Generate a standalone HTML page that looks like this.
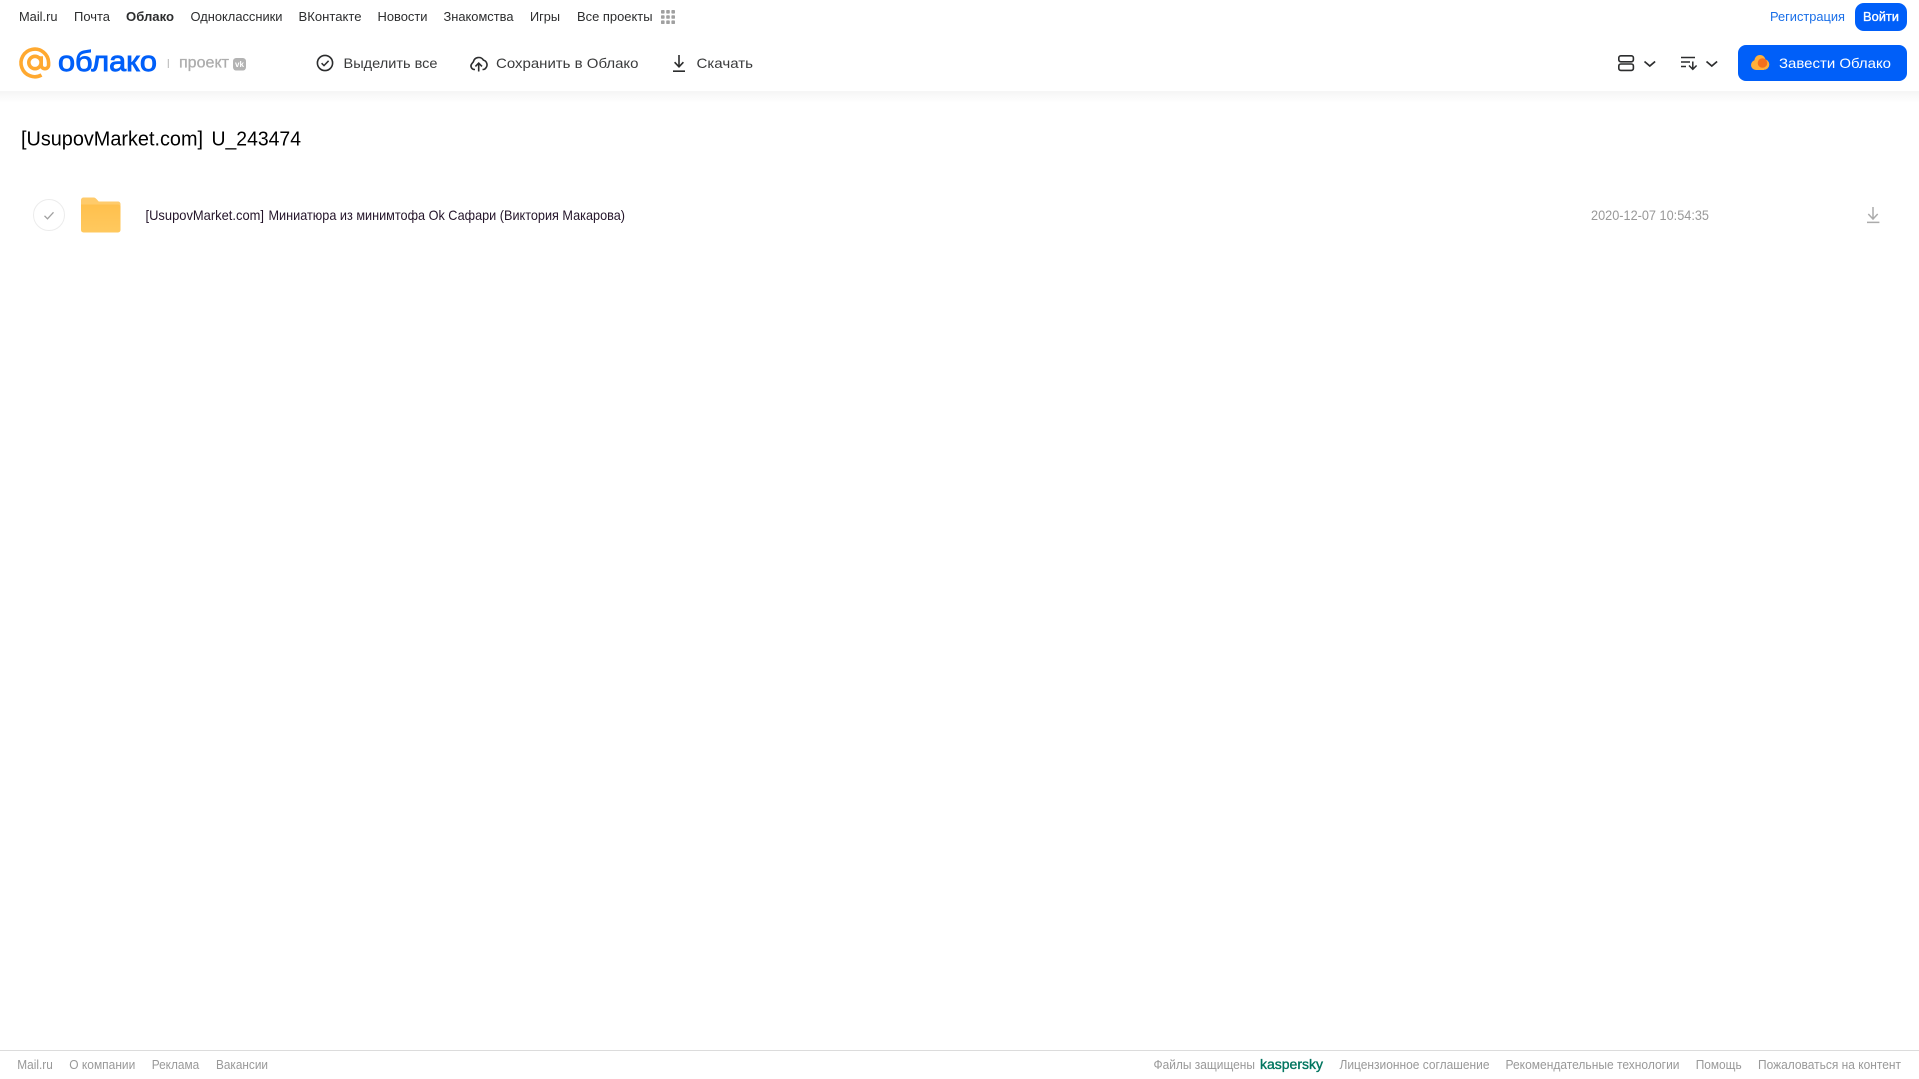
<!DOCTYPE html>
<html lang="ru"><head><meta charset="utf-8"><title>[UsupovMarket.com] U_243474</title>
<style>
html,body{margin:0;padding:0;background:#fff;width:1919px;height:1079px;overflow:hidden}
svg{display:block;position:absolute;left:0;top:0}
text{font-family:"Liberation Sans",sans-serif;white-space:pre}
.n{font-size:13px;fill:#2c2d2e}
.t{font-size:14px;fill:#3a3b3c}
.f{font-size:13px;fill:#999}
</style></head><body>
<svg width="1919" height="1079" viewBox="0 0 1919 1079" xmlns="http://www.w3.org/2000/svg">
<defs>
<linearGradient id="sh" x1="0" y1="0" x2="0" y2="1"><stop offset="0" stop-color="#f5f5f5"/><stop offset="1" stop-color="#fff"/></linearGradient>
<linearGradient id="fo" x1="0" y1="0" x2="0" y2="1"><stop offset="0" stop-color="#ffc04d"/><stop offset="1" stop-color="#ffc95f"/></linearGradient>
</defs>
<rect x="0" y="91" width="1919" height="12" fill="url(#sh)"/>

<!-- top nav -->
<g class="nav">
<text class="n" x="19" y="21" textLength="38.5" lengthAdjust="spacingAndGlyphs">Mail.ru</text>
<text class="n" x="74" y="21" textLength="36" lengthAdjust="spacingAndGlyphs">Почта</text>
<text class="n" x="126" y="21" textLength="48" lengthAdjust="spacingAndGlyphs" font-weight="700">Облако</text>
<text class="n" x="190.5" y="21" textLength="92" lengthAdjust="spacingAndGlyphs">Одноклассники</text>
<text class="n" x="298.5" y="21" textLength="63" lengthAdjust="spacingAndGlyphs">ВКонтакте</text>
<text class="n" x="377.5" y="21" textLength="50" lengthAdjust="spacingAndGlyphs">Новости</text>
<text class="n" x="443.5" y="21" textLength="70" lengthAdjust="spacingAndGlyphs">Знакомства</text>
<text class="n" x="530" y="21" textLength="30" lengthAdjust="spacingAndGlyphs">Игры</text>
<text class="n" x="577" y="21" textLength="75.5" lengthAdjust="spacingAndGlyphs">Все проекты</text>
</g>
<g fill="#a0a0a0">
<rect x="661" y="10" width="3.6" height="3.6" rx=".8"/><rect x="666.2" y="10" width="3.6" height="3.6" rx=".8"/><rect x="671.4" y="10" width="3.6" height="3.6" rx=".8"/>
<rect x="661" y="15.2" width="3.6" height="3.6" rx=".8"/><rect x="666.2" y="15.2" width="3.6" height="3.6" rx=".8"/><rect x="671.4" y="15.2" width="3.6" height="3.6" rx=".8"/>
<rect x="661" y="20.4" width="3.6" height="3.6" rx=".8"/><rect x="666.2" y="20.4" width="3.6" height="3.6" rx=".8"/><rect x="671.4" y="20.4" width="3.6" height="3.6" rx=".8"/>
</g>
<text x="1770" y="21" font-size="13" fill="#1a6fe8" textLength="75" lengthAdjust="spacingAndGlyphs">Регистрация</text>
<rect x="1855" y="3" width="52" height="28" rx="9" fill="#005ff9"/>
<text x="1863" y="21" font-size="13" fill="#fff" stroke="#fff" stroke-width=".35" textLength="36" lengthAdjust="spacingAndGlyphs">Войти</text>

<!-- logo -->
<g transform="translate(19,47)" fill="none" stroke="#ffa930" stroke-width="3.6">
<circle cx="16" cy="15.5" r="6.2"/>
<path d="M22.2 9.2V18a3.7 3.7 0 0 0 7.4 0V15.5A13.8 13.8 0 1 0 22.5 28"/>
</g>
<text x="58" y="71" font-size="29" fill="#005ff9" stroke="#005ff9" stroke-width=".9" textLength="99" lengthAdjust="spacingAndGlyphs">облако</text>
<rect x="167.8" y="59" width="1" height="9" fill="#b5b5b5"/>
<text x="179" y="67.5" font-size="16" fill="#adadad" stroke="#adadad" stroke-width=".3" textLength="50" lengthAdjust="spacingAndGlyphs">проект</text>
<rect x="233" y="58" width="13" height="12.5" rx="3.2" fill="#b3b3b3"/>
<text x="235" y="67" font-size="8" font-weight="700" fill="#fff" textLength="9" lengthAdjust="spacingAndGlyphs">vk</text>

<!-- toolbar -->
<circle cx="325" cy="63" r="7.6" fill="none" stroke="#2c2d2e" stroke-width="1.6"/>
<path d="M321.6 63.2l2.4 2.4 4.6-4.8" fill="none" stroke="#2c2d2e" stroke-width="1.5"/>
<text class="t" x="343.5" y="68" textLength="94" lengthAdjust="spacingAndGlyphs">Выделить все</text>

<path d="M475 69.5h-1.2a3.6 3.6 0 0 1-2-5.8l1.6-2a5.5 5.5 0 0 1 10-1.6 4.8 4.8 0 0 1 2.6 7.6c-.7 1.2-1.6 1.8-2.8 1.8h-.7" fill="none" stroke="#2c2d2e" stroke-width="1.6"/>
<path d="M478.7 71.5V63.5M475.4 66.4l3.3-3.3 3.3 3.3" fill="none" stroke="#2c2d2e" stroke-width="1.6"/>
<text class="t" x="496" y="68" textLength="142.5" lengthAdjust="spacingAndGlyphs">Сохранить в Облако</text>

<path d="M679 55v11.5M674.6 62.2l4.4 4.6 4.4-4.6M673 71.2h12" fill="none" stroke="#2c2d2e" stroke-width="1.6"/>
<text class="t" x="696.5" y="68" textLength="56.5" lengthAdjust="spacingAndGlyphs">Скачать</text>

<!-- right toolbar -->
<rect x="1618.8" y="55.8" width="14.6" height="6" rx="2" fill="none" stroke="#2c2d2e" stroke-width="1.6"/>
<rect x="1618.8" y="64" width="14.6" height="6.4" rx="2" fill="none" stroke="#2c2d2e" stroke-width="1.6"/>
<path d="M1644.5 61.5l5.3 4.5 5.3-4.5" fill="none" stroke="#2c2d2e" stroke-width="1.7"/>
<path d="M1681 57.5h14M1681 62h9M1681 66.5h5" fill="none" stroke="#2c2d2e" stroke-width="1.4"/>
<path d="M1692.8 61.5V69M1689 65.5l3.8 3.8 3.8-3.8" fill="none" stroke="#2c2d2e" stroke-width="1.5"/>
<path d="M1706.5 61.5l5.3 4.5 5.3-4.5" fill="none" stroke="#2c2d2e" stroke-width="1.7"/>

<rect x="1738" y="45" width="169" height="36" rx="8" fill="#005ff9"/>
<g>
<circle cx="1756" cy="65" r="5" fill="#ffb03a"/><circle cx="1760" cy="60.5" r="5.5" fill="#ffb03a"/><circle cx="1764" cy="64.5" r="5.3" fill="#ffb03a"/>
<rect x="1756" y="63" width="8" height="7" fill="#ffb03a"/>
<circle cx="1762.5" cy="63" r="4.8" fill="#f4701e"/>
</g>
<text x="1779" y="68" font-size="14" fill="#fff" textLength="112" lengthAdjust="spacingAndGlyphs">Завести Облако</text>

<!-- content -->
<text x="21" y="145.5" font-size="20.5" fill="#000" textLength="182" lengthAdjust="spacingAndGlyphs">[UsupovMarket.com]</text>
<text x="211.5" y="145.5" font-size="20.5" fill="#000" textLength="89.5" lengthAdjust="spacingAndGlyphs">U_243474</text>

<circle cx="49" cy="215" r="15.5" fill="#fff" stroke="#ececec" stroke-width="1"/>
<path d="M44.5 215.8l3 3 6-6.5" fill="none" stroke="#a0a0a0" stroke-width="1.3"/>

<path d="M81 200a2.5 2.5 0 0 1 2.5-2.5h10c1.5 0 2.3.8 3.2 1.8l2 2.2H118a2.5 2.5 0 0 1 2.5 2.5V215H81z" fill="#ffcb6b"/>
<path d="M81 204.5h37a2.5 2.5 0 0 1 2.5 2.5v23a2.5 2.5 0 0 1-2.5 2.5H83.5A2.5 2.5 0 0 1 81 230z" fill="url(#fo)"/>

<text x="145.5" y="220" font-size="14" fill="#24152a" textLength="118.5" lengthAdjust="spacingAndGlyphs">[UsupovMarket.com]</text>
<text x="268.5" y="220" font-size="14" fill="#24152a" textLength="356.5" lengthAdjust="spacingAndGlyphs">Миниатюра из минимтофа Ok Сафари (Виктория Макарова)</text>
<text x="1591" y="220" font-size="14" fill="#999" textLength="118" lengthAdjust="spacingAndGlyphs">2020-12-07 10:54:35</text>
<path d="M1873 207v12M1868.3 214l4.7 5 4.7-5M1867 222.4h12.4" fill="none" stroke="#ababab" stroke-width="1.5"/>

<!-- footer -->
<rect x="0" y="1050" width="1919" height="1" fill="#dcdcdc"/>
<text class="f" x="17.3" y="1069" textLength="35.5" lengthAdjust="spacingAndGlyphs">Mail.ru</text>
<text class="f" x="69.3" y="1069" textLength="66" lengthAdjust="spacingAndGlyphs">О компании</text>
<text class="f" x="151.7" y="1069" textLength="47.5" lengthAdjust="spacingAndGlyphs">Реклама</text>
<text class="f" x="216" y="1069" textLength="52" lengthAdjust="spacingAndGlyphs">Вакансии</text>
<text class="f" x="1153.5" y="1069" textLength="101.5" lengthAdjust="spacingAndGlyphs">Файлы защищены</text>
<text x="1260" y="1069" font-size="13.5" fill="#00755f" stroke="#00755f" stroke-width=".35" textLength="63" lengthAdjust="spacingAndGlyphs">kaspersky</text>
<text class="f" x="1339.5" y="1069" textLength="150" lengthAdjust="spacingAndGlyphs">Лицензионное соглашение</text>
<text class="f" x="1505.5" y="1069" textLength="174" lengthAdjust="spacingAndGlyphs">Рекомендательные технологии</text>
<text class="f" x="1695.7" y="1069" textLength="46" lengthAdjust="spacingAndGlyphs">Помощь</text>
<text class="f" x="1758" y="1069" textLength="143" lengthAdjust="spacingAndGlyphs">Пожаловаться на контент</text>
</svg>
</body></html>
